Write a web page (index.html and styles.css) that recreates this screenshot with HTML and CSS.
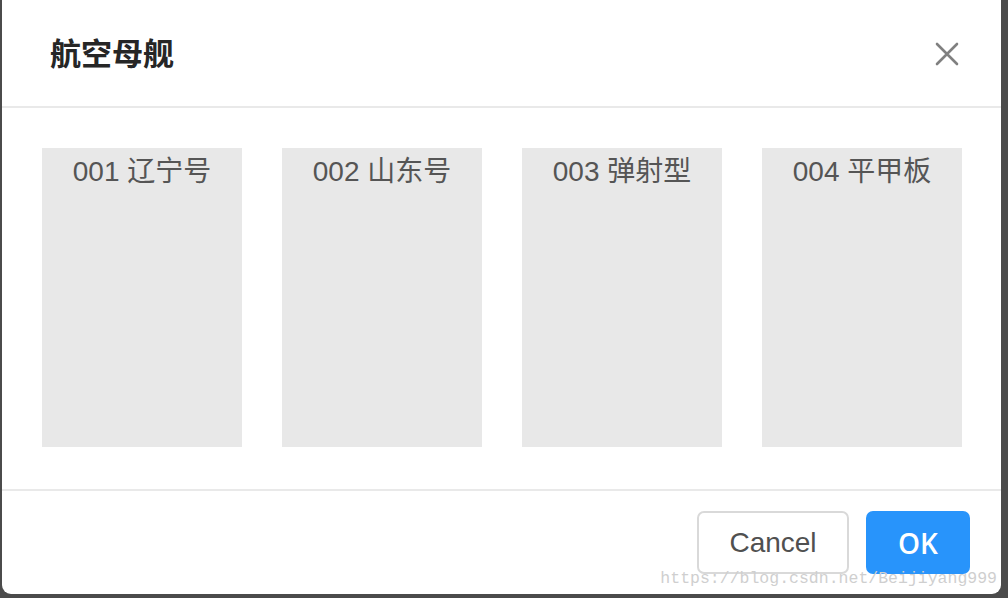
FILE: index.html
```html
<!DOCTYPE html>
<html lang="zh-CN">
<head>
    <meta charset="UTF-8">
    <meta name="viewport" content="width=device-width, initial-scale=1.0">
    <title>航空母舰</title>
    <link rel="stylesheet" href="styles.css">
</head>
<body>
    <div class="modal">
        <!-- 标题栏 -->
        <div class="modal-header">
            <div class="modal-title">航空母舰</div>
            <button class="modal-close" aria-label="close">
                <svg width="24" height="24" viewBox="0 0 24 24">
                    <path d="M2 2 L22 22 M22 2 L2 22" stroke="#808080" stroke-width="2.6" stroke-linecap="round" fill="none"/>
                </svg>
            </button>
        </div>

        <!-- 卡片列表 -->
        <div class="modal-body">
            <div class="card">001 辽宁号</div>
            <div class="card">002 山东号</div>
            <div class="card">003 弹射型</div>
            <div class="card">004 平甲板</div>
        </div>

        <!-- 底部按钮 -->
        <div class="modal-footer">
            <button class="btn btn-cancel">Cancel</button>
            <button class="btn btn-ok">OK</button>
        </div>

        <div class="watermark">https://blog.csdn.net/Beijiyang999</div>
    </div>
</body>
</html>
```

FILE: styles.css
```css
body {
    margin: 0;
    padding: 0;
    background-color: #4b4b4b;
    font-family: 'Liberation Sans', 'Noto Sans CJK SC', sans-serif;
}
.modal {
    position: relative;
    margin-left: 2px;
    width: 999px;
    height: 594px;
    background-color: #fff;
    border-radius: 0 0 9px 9px;
    display: flex;
    flex-direction: column;
    overflow: hidden;
}
.modal-header {
    height: 106px;
    border-bottom: 2px solid #e9e9e9;
    display: flex;
    align-items: center;
    justify-content: space-between;
    padding: 0 42px 0 48px;
}
.modal-title {
    font-family: 'Noto Sans CJK SC', sans-serif;
    font-size: 31px;
    font-weight: bold;
    color: #262626;
    margin-top: -4px;
}
.modal-close {
    border: none;
    background: none;
    padding: 0;
    width: 24px;
    height: 24px;
    margin-top: 2px;
    cursor: pointer;
}
.modal-body {
    display: flex;
    gap: 40px;
    padding: 40px 39px 0 40px;
    height: 341px;
    border-bottom: 2px solid #e9e9e9;
}
.card {
    flex-shrink: 0;
    width: 200px;
    height: 299px;
    background-color: #e8e8e8;
    color: #555;
    font-family: 'Liberation Sans', 'Noto Sans CJK SC', sans-serif;
    font-size: 28px;
    line-height: 48px;
    text-align: center;
}
.modal-footer {
    flex: 1;
    display: flex;
    justify-content: flex-end;
    align-items: flex-start;
    gap: 17px;
    padding: 20px 31px 0 0;
}
.btn {
    height: 63px;
    border-radius: 7px;
    font-family: 'Liberation Sans', sans-serif;
    font-size: 28px;
    cursor: pointer;
    box-sizing: border-box;
}
.btn-cancel {
    width: 152px;
    background-color: #fff;
    border: 2px solid #d9d9d9;
    color: #505050;
}
.btn-ok {
    width: 104px;
    background-color: #2894fb;
    border: none;
    color: #fff;
    font-family: 'Open Sans', sans-serif;
    font-weight: 600;
}
.watermark {
    position: absolute;
    right: 4px;
    bottom: 6px;
    font-family: 'Liberation Mono', monospace;
    font-size: 16.5px;
    color: #cfcfcf;
    pointer-events: none;
}
```
